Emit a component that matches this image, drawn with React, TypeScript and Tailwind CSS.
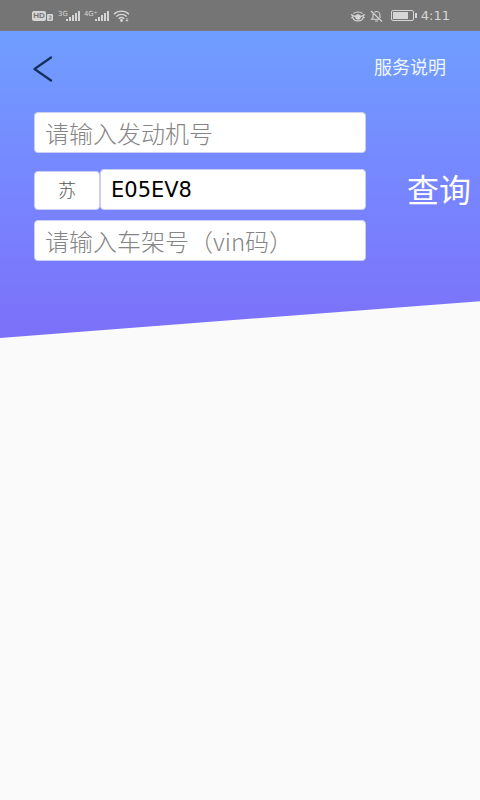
import { useState } from "react";

const fieldClass =
  "block h-[41px] w-full min-w-0 rounded border border-[#c9cff5] bg-white px-[10px] placeholder:text-[#858585] placeholder:opacity-100 focus:outline-none";

function Signal({ label }: { label: string }) {
  return (
    <span className="flex items-start">
      <span className="text-[7px] leading-[8px]">{label}</span>
      <svg className="-ml-0.5" width="14" height="12" viewBox="0 0 14 12" fill="currentColor" aria-hidden="true">
        <rect x="0" y="9" width="2" height="2" />
        <rect x="3" y="7" width="2" height="4" />
        <rect x="6" y="5" width="2" height="6" />
        <rect x="9" y="3" width="2" height="8" />
        <rect x="12" y="1" width="2" height="10" />
      </svg>
    </span>
  );
}

function StatusBar() {
  return (
    <div className="flex h-[31px] items-center justify-between bg-[#757575] pl-8 pr-[30px] text-[#d6d6d6]">
      <div className="flex items-center">
        <span className="flex h-[10px] w-[14px] items-center justify-center rounded-[2px] bg-[#d6d6d6] font-['Liberation_Sans',sans-serif] text-[8px] font-bold leading-none text-[#757575]">
          HD
        </span>
        <svg className="ml-px mt-[2px]" width="6" height="8" viewBox="0 0 6 8" aria-hidden="true">
          <rect y="1" width="6" height="7" rx="1" fill="currentColor" />
          <path d="M2 3h2v1.500L2 6h2.500" fill="none" stroke="#757575" strokeWidth="0.800" />
        </svg>
        <span className="ml-[5px]">
          <Signal label="3G" />
        </span>
        <span className="ml-1">
          <Signal label="4G⁺" />
        </span>
        <svg
          className="ml-1"
          width="17"
          height="12"
          viewBox="0 0 17 12"
          fill="none"
          stroke="currentColor"
          strokeWidth="1.300"
          aria-hidden="true"
        >
          <path d="M1 4.200C5 .2 12 .2 16 4.200M3.300 6.500c3-2.800 7.400-2.800 10.400 0M5.700 8.700c1.700-1.500 3.900-1.500 5.600 0" />
          <circle cx="8.500" cy="10.500" r="0.800" fill="currentColor" />
          <path d="M14 8v3M12.800 10l1.200 1.300 1.200-1.300" strokeWidth="0.900" />
        </svg>
      </div>
      <div className="flex items-center">
        <svg
          width="16"
          height="12"
          viewBox="0 0 16 12"
          fill="none"
          stroke="currentColor"
          strokeWidth="1.200"
          aria-hidden="true"
        >
          <path d="M1 4.500c3.500 3 10.500 3 14 0M3 7.500C3.500 12 12.500 12 13 7.500M3.500 3.500c2.500-2 6.500-2 9 0M1.500 8l1.500-1.500M14.500 8L13 6.500" />
          <circle cx="8" cy="7" r="2.200" fill="currentColor" />
        </svg>
        <svg
          className="ml-1"
          width="13"
          height="12"
          viewBox="0 0 13 12"
          fill="none"
          stroke="currentColor"
          strokeWidth="1.100"
          aria-hidden="true"
        >
          <path d="M4.500 2.200C7 .6 10 2 10 5v3M3 4v3.500L1.500 9.200H9M5 11h3M1 1l11 10.500" />
        </svg>
        <svg className="ml-2" width="26" height="11" viewBox="0 0 26 11" aria-hidden="true">
          <rect x="0.500" y="0.500" width="22" height="10" rx="1.500" fill="none" stroke="currentColor" />
          <rect x="2" y="2" width="15" height="7" fill="currentColor" />
          <rect x="24" y="3" width="2" height="5" fill="currentColor" />
        </svg>
        <span className="ml-1 text-[13px] leading-5">4:11</span>
      </div>
    </div>
  );
}

export default function App() {
  const [engine, setEngine] = useState("");
  const [plate, setPlate] = useState("E05EV8");
  const [vin, setVin] = useState("");

  return (
    <div className="min-h-screen bg-[#fafafa] font-['DejaVu_Sans','Noto_Sans_CJK_SC',sans-serif]">
      <StatusBar />
      <main className="bg-linear-to-b from-[#6f9eff] via-[#7786ff] to-[#7c70f9] pb-[77px] [clip-path:polygon(0_0,100%_0,100%_88%,0_100%)]">
        <header className="flex h-[81px] items-start justify-between pl-[33px] pr-[34px] pt-6">
          <button type="button" aria-label="返回" className="text-[#14305f]">
            <svg
              width="20"
              height="28"
              viewBox="0 0 20 28"
              fill="none"
              stroke="currentColor"
              strokeWidth="2.200"
              strokeLinecap="round"
              strokeLinejoin="round"
            >
              <path d="M18 2.500L1.500 14 18 25.500" />
            </svg>
          </button>
          <a href="#service" className="text-[18px] leading-[26px] text-[#edf7ff]">
            服务说明
          </a>
        </header>
        <form
          className="flex items-center gap-[41px] pl-[34px] pr-[9px]"
          onSubmit={(e) => e.preventDefault()}
        >
          <div className="min-w-0 flex-1">
            <input
              aria-label="发动机号"
              className={`${fieldClass} font-['Noto_Sans_CJK_SC',sans-serif] text-[24px] font-light`}
              placeholder="请输入发动机号"
              value={engine}
              onChange={(e) => setEngine(e.target.value)}
            />
            <div className="mt-4 flex items-end">
              <select
                aria-label="省份"
                className="h-[39px] w-[66px] shrink-0 appearance-none rounded border border-[#c9cff5] bg-white text-center text-[18px] font-light text-[#555] [text-align-last:center] focus:outline-none"
                defaultValue="苏"
              >
                <option>苏</option>
                <option>沪</option>
                <option>浙</option>
              </select>
              <input
                aria-label="车牌号"
                className={`${fieldClass} font-['DejaVu_Sans',sans-serif] text-[21px] text-black`}
                value={plate}
                onChange={(e) => setPlate(e.target.value)}
              />
            </div>
            <input
              aria-label="车架号"
              className={`${fieldClass} mt-[10px] font-['Noto_Sans_CJK_SC',sans-serif] text-[24px] font-light`}
              placeholder="请输入车架号（vin码）"
              value={vin}
              onChange={(e) => setVin(e.target.value)}
            />
          </div>
          <button type="submit" className="shrink-0 pt-2 text-[32px] leading-10 text-white">
            查询
          </button>
        </form>
      </main>
    </div>
  );
}
